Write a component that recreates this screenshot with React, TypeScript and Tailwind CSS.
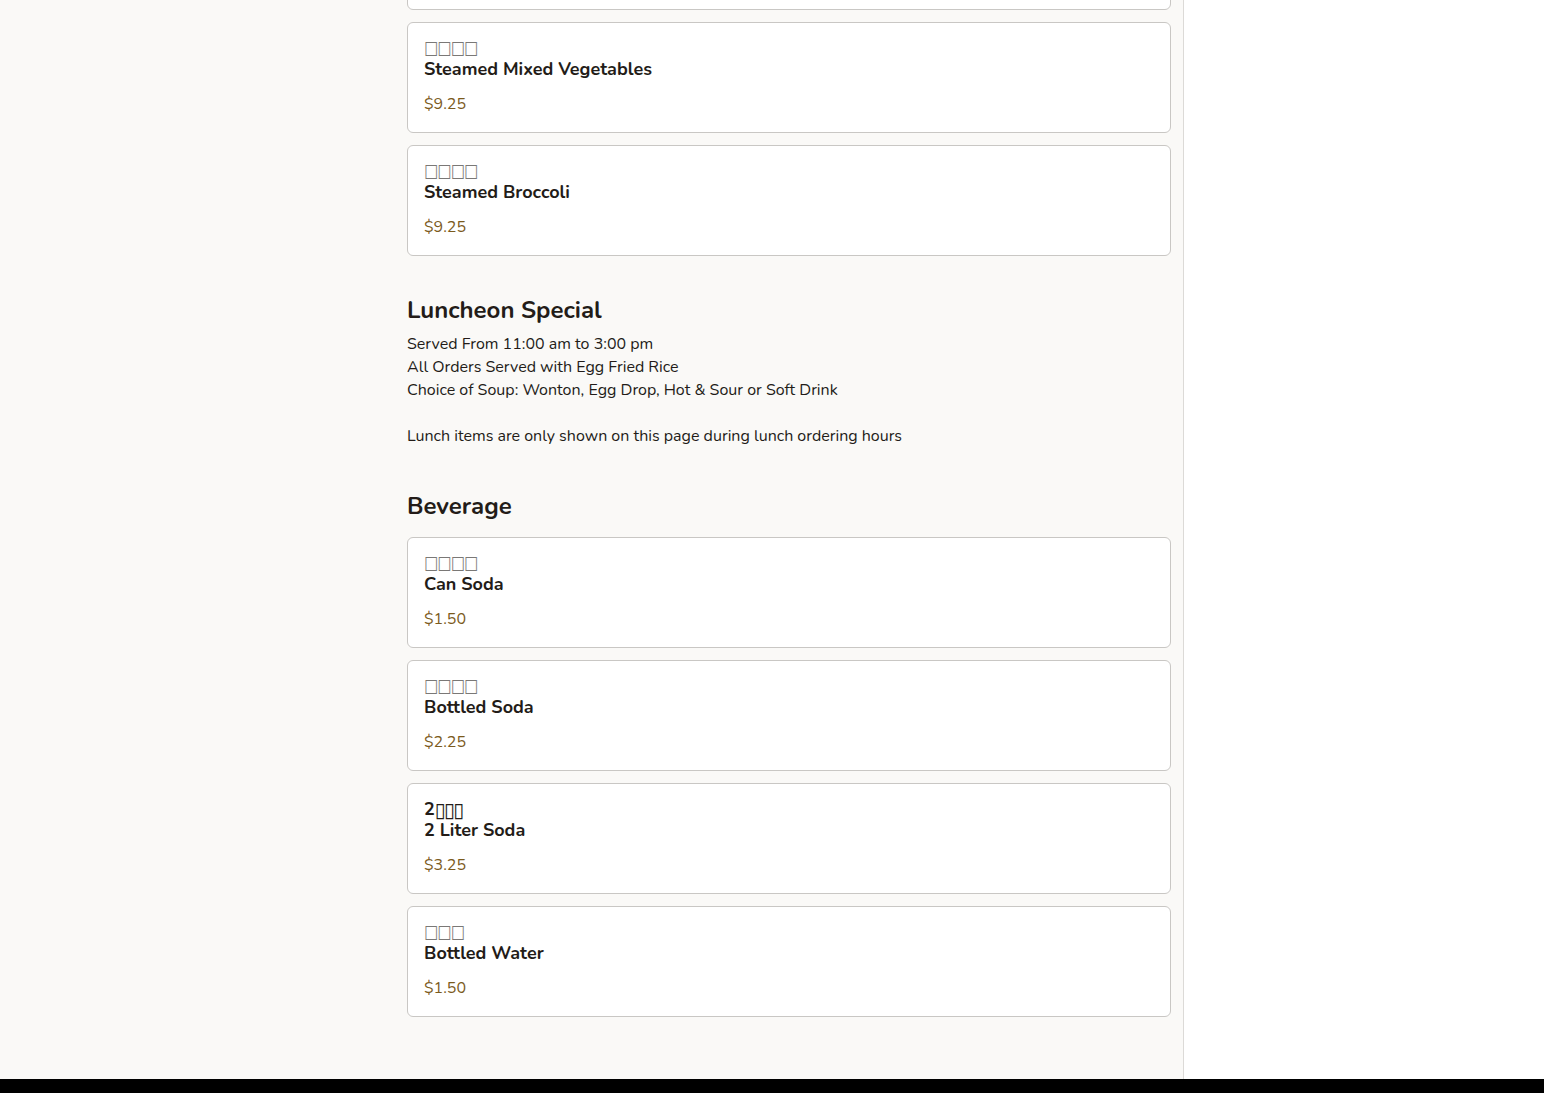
import React from "react";

type Item = { zh: string; name: string; price: string; narrow?: boolean; lead?: string };

const veg: Item[] = [
  { zh: "□□□□", name: "Steamed Mixed Vegetables", price: "$9.25" },
  { zh: "□□□□", name: "Steamed Broccoli", price: "$9.25" },
];

const bev: Item[] = [
  { zh: "□□□□", name: "Can Soda", price: "$1.50" },
  { zh: "□□□□", name: "Bottled Soda", price: "$2.25" },
  { zh: "▯▯▯", lead: "2", name: "2 Liter Soda", price: "$3.25", narrow: true },
  { zh: "□□□", name: "Bottled Water", price: "$1.50" },
];

function Card({ item }: { item: Item }) {
  return (
    <div className="rounded-[6px] border border-[#c9c7c4] bg-white px-[16px] pt-[15px] pb-[16px]">
      <div className="flex h-[21px] items-center text-[18px] font-bold leading-[21px] text-[#231c18]">
        {item.lead && <span>{item.lead}</span>}
        {item.narrow ? (
          <span className="inline-block text-[20px] leading-[18px] font-normal tracking-[-1.8px] text-[#231c18] [font-family:'DejaVu_Sans',sans-serif]">
            {item.zh}
          </span>
        ) : (
          <span className="inline-block origin-center scale-y-[1.25] text-[15px] leading-[21px] font-normal tracking-[-0.8px] text-[#7a7876] [font-family:'DejaVu_Sans',sans-serif]">
            {item.zh}
          </span>
        )}
      </div>
      <div className="h-[21px] text-[18px] font-bold leading-[21px] text-[#231c18]">{item.name}</div>
      <div className="mt-[12px] h-[24px] text-[16px] leading-[24px] text-[#7b5a1c]">{item.price}</div>
    </div>
  );
}

export default function App() {
  return (
    <div className="min-h-screen bg-white [font-family:'Nunito','Lato','Noto_Sans',sans-serif] text-[#231c18]">
      <div className="flex">
        <main className="min-h-[1079px] w-[1184px] shrink-0 overflow-hidden border-r border-[#dcdad7] bg-[#faf9f7] pl-[407px]">
          <div className="w-[764px] pb-[62px]">
            <div className="-mt-[101px] flex flex-col gap-[12px]">
              <Card item={{ zh: "□□□□", name: "Steamed Tofu", price: "$9.25" }} />
              {veg.map((it) => (
                <Card key={it.name} item={it} />
              ))}
            </div>

            <section className="mt-[38px]">
              <h2 className="h-[32px] text-[24px] font-bold leading-[32px] text-[#231c18]">Luncheon Special</h2>
              <div className="mt-[7px] text-[16px] leading-[23px] text-[#231c18]">
                <p>Served From 11:00 am to 3:00 pm</p>
                <p>All Orders Served with Egg Fried Rice</p>
                <p>Choice of Soup: Wonton, Egg Drop, Hot &amp; Sour or Soft Drink</p>
                <p className="h-[23px]"></p>
                <p>Lunch items are only shown on this page during lunch ordering hours</p>
              </div>
            </section>

            <section className="mt-[42px]">
              <h2 className="h-[32px] text-[24px] font-bold leading-[32px] text-[#231c18]">Beverage</h2>
              <div className="mt-[15px] flex flex-col gap-[12px]">
                {bev.map((it) => (
                  <Card key={it.name} item={it} />
                ))}
              </div>
            </section>
          </div>
        </main>
        <aside className="flex-1 bg-white"></aside>
      </div>
      <footer className="h-[200px] bg-black"></footer>
    </div>
  );
}
